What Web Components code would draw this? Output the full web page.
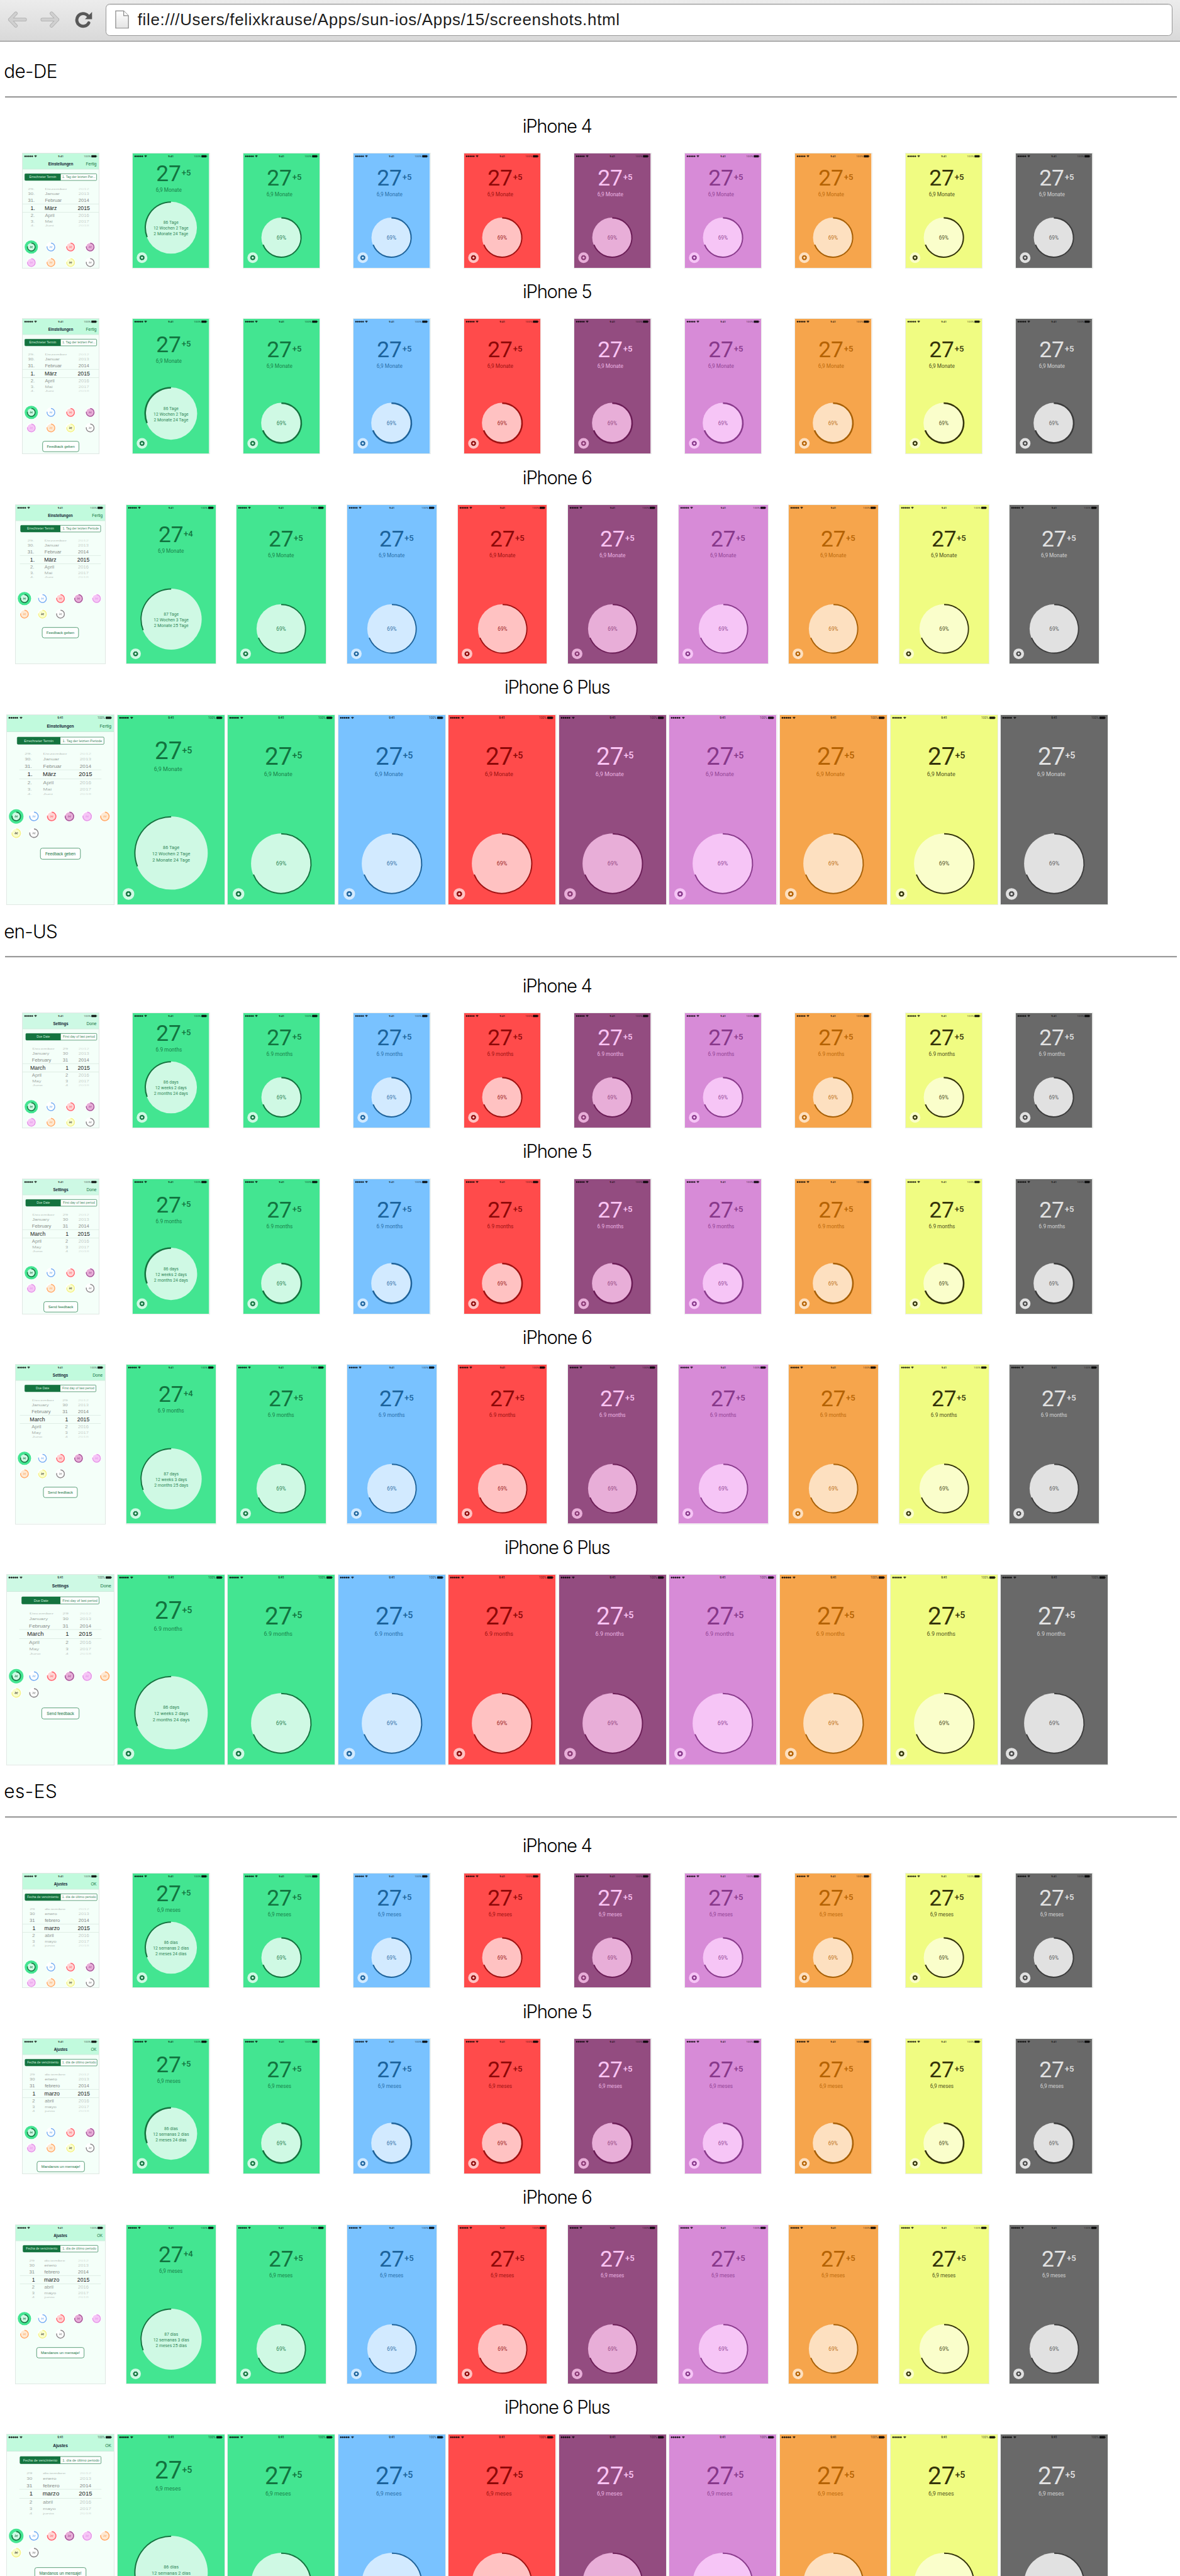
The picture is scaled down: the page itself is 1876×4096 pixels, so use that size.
<!DOCTYPE html>
<html lang="en">
<head>
<meta charset="utf-8">
<title>screenshots.html</title>
<style>
html,body{margin:0;padding:0;background:#fff;overflow:hidden}
body{font-family:Inter,"Liberation Sans",sans-serif}
</style>
</head>
<body>
<overview-page></overview-page>
<script>
// Colour themes of the app: background, digits, disc, progress arc
const THEMES = {
  green:  {bg:'#43e591', ink:'#12733f', disc:'#cff9e4', arc:'#14733f', ring:'#14733f'},
  blue:   {bg:'#79c2ff', ink:'#1b629b', disc:'#d2eaff', arc:'#1f639a', ring:'#7ab2f2'},
  red:    {bg:'#ff4b4b', ink:'#8d0808', disc:'#ffc2c2', arc:'#a01212', ring:'#ff6b74'},
  purple: {bg:'#934c80', ink:'#fbc4f4', disc:'#e8aed8', arc:'#6b1d56', ring:'#a7589a'},
  pink:   {bg:'#d78bd7', ink:'#87388a', disc:'#f6c5f6', arc:'#8a3b8c', ring:'#e49be8'},
  orange: {bg:'#f6a54c', ink:'#b46203', disc:'#fde0c0', arc:'#a86007', ring:'#ffad6b'},
  yellow: {bg:'#f0fc82', ink:'#33330a', disc:'#fafecb', arc:'#33330a', ring:'#f3f38a'},
  gray:   {bg:'#696969', ink:'#e2e2e2', disc:'#e1e1e1', arc:'#3b3b3b', ring:'#8b8b8b'}
};
const ORDER = ['green','blue','red','purple','pink','orange','yellow','gray'];

// Geometry per device; s is the scale of the settings screen
const MODELS = {
  'iPhone 4': {w:128.6,h:193,s:1,cols:4,pitch:33.1,i0:14.6,x27:39.5,y27:46.4,fs:37.7,xp:82.6,mid:60.9,ysub:64.3,drop:7.9,
    big:[64.5,125.2,43.3],small:[64,141.8,33.2],aw:2.2,gx:15.7,gy:175.8,gr:9,tw:1},
  'iPhone 5': {w:128.6,h:227.3,s:1,cols:4,pitch:33.1,i0:14.6,x27:39.5,y27:56.4,fs:37.7,xp:82.6,mid:60.9,ysub:74.3,drop:8,
    big:[64.6,159.8,43.6],small:[64,175.7,33.6],aw:2.7,gx:15.7,gy:210,gr:9,tw:1},
  'iPhone 6': {w:150.6,h:267.6,s:1,cols:5,pitch:30.4,i0:14.7,x27:54,y27:62.6,fs:37.7,xp:96.6,mid:75,ysub:80.3,drop:7.6,
    big:[75.5,192.5,50.9],small:[75.3,208.8,41],aw:2,gx:15.4,gy:251,gr:9,tw:1},
  'iPhone 6 Plus': {w:180.4,h:320,s:1.09,cols:6,pitch:29.9,i0:15.7,x27:62.6,y27:74.6,fs:41.2,xp:108.6,mid:85.2,ysub:94.3,drop:8.7,
    big:[90.3,232.8,61.2],small:[90.2,250.5,50.3],aw:2.1,gx:18.3,gy:301.7,gr:9.8,tw:1.09}
};

const LOCALES = {
  'de-DE': {title:'Einstellungen',tw:42,done:'Fertig',dw:18,left:'Errechneter Termin',lw:45.5,right:'1. Tag der letzten Periode',rshort:'1. Tag der letzten Per...',rw:56,
    feedback:'Feedback geben',fw:47,btn:61.3,sub:'6,9 Monate',sw:43.7,
    days:n=>[n+' Tage',`12 Wochen ${n-84} Tage`,`2 Monate ${n-62} Tage`],dws:[25.5,59,58.3],
    rows:[['29.','Dezember','2012'],['30.','Januar','2013'],['31.','Februar','2014'],['1.','März','2015'],['2.','April','2016'],['3.','Mai','2017'],['4.','Juni','2018']],
    dayX:-43.3,monX:-27.3,segs:[[3.6,124.8],[3.6,124.8],[8.2,143.2],[17.3,163.7]],pale:[0,0,0,0]},
  'en-US': {title:'Settings',tw:25.7,done:'Done',dw:17,left:'Due Date',lw:22.5,right:'First day of last period',rw:54,
    feedback:'Send feedback',fw:42.3,btn:57.2,sub:'6.9 months',sw:44.2,
    days:n=>[n+' days',`12 weeks ${n-84} days`,`2 months ${n-62} days`],dws:[25.3,53.2,57.3],
    rows:[['29','December','2012'],['30','January','2013'],['31','February','2014'],['1','March','2015'],['2','April','2016'],['3','May','2017'],['4','June','2018']],
    dayX:13.2,monX:-51.6,segs:[[5.3,125],[5.3,125],[15.3,135.3],[25,155.4]],pale:[1,1,0,1]},
  'es-ES': {title:'Ajustes',tw:23,done:'OK',dw:9.5,left:'Fecha de vencimiento',lw:53,right:'1. día de último periodo',rw:57,
    feedback:'Mandanos un mensaje!',fw:65.5,btn:80,sub:'6,9 meses',sw:39.5,
    days:n=>[n+' días',`12 semanas ${n-84} días`,`2 meses ${n-62} días`],dws:[23.3,60.5,52.5],
    rows:[['29','diciembre','2012'],['30','enero','2013'],['31','febrero','2014'],['1','marzo','2015'],['2','abril','2016'],['3','mayo','2017'],['4','junio','2018']],
    dayX:-42.7,monX:-27.6,segs:[[4,125.5],[4,125.5],[12.3,138.7],[22,158.7]],pale:[0,0,0,0]}
};

const txt = (x,y,size,fill,str,o={}) =>
  `<text x="${x}" y="${y}" font-size="${size}" fill="${fill}" text-anchor="${o.anchor||'start'}"`+
  (o.w?` textLength="${o.w}" lengthAdjust="spacingAndGlyphs"`:'')+(o.weight?` font-weight="${o.weight}"`:'')+
  (o.op?` opacity="${o.op}"`:'')+`>${str}</text>`;

// Arc starting at 12 o'clock; a positive fraction runs clockwise
function arc(cx,cy,r,f,colour,w){
  const a=f*2*Math.PI, x=cx+r*Math.sin(a), y=cy-r*Math.cos(a);
  return `<path d="M${cx} ${cy-r}A${r} ${r} 0 ${Math.abs(f)>.5?1:0} ${f>0?1:0} ${x.toFixed(2)} ${y.toFixed(2)}" fill="none" stroke="${colour}" stroke-width="${w}"/>`;
}

function statusBar(w,s){
  let o='';
  for(let i=0;i<5;i++) o+=`<circle cx="${4.2+i*3*s}" cy="4.7" r="${1.3*s}"/>`;
  const wx=21.8*s;
  o+=`<path d="M${wx-2.4*s} 3.9Q${wx} 2 ${wx+2.4*s} 3.9L${wx} ${4.7+1.8*s}Z" opacity=".8"/>`;
  o+=txt(w/2,4.7+1.7*s,4.6*s,'#000','9:41',{anchor:'middle',weight:700,op:.85});
  o+=txt(w-13.8*s,4.7+1.6*s,4.5*s,'#000','100%',{anchor:'end',w:11.5*s,op:.7});
  o+=`<rect x="${w-12.7*s}" y="${4.7-1.8*s}" width="${8.6*s}" height="${3.6*s}" rx=".7"/><rect x="${w-3.8*s}" y="4.1" width=".8" height="1.2"/>`;
  return `<g fill="#000" opacity=".88">${o}</g>`;
}

class PhoneShot extends HTMLElement {
  connectedCallback(){
    const model=this.getAttribute('model'), m=MODELS[model], l=LOCALES[this.getAttribute('locale')];
    const screen=this.getAttribute('screen');
    const body = screen==='settings' ? this.settings(m,l,Object.keys(MODELS).indexOf(model))
      : this.home(m,l,THEMES[this.getAttribute('theme')],screen==='days',model);
    this.attachShadow({mode:'open'}).innerHTML=`<style>
      :host{display:block;width:${m.w}px;height:${m.h}px;outline:1.2px solid ${screen==='settings'?'#e0e8e4':'#e9ece9'}}
      svg{display:block;width:100%;height:100%}
      text{font-family:Roboto,"Liberation Sans",sans-serif}
      .h text{font-family:"Liberation Sans",sans-serif}
    </style><svg viewBox="0 0 ${m.w} ${m.h}" preserveAspectRatio="none">${body}${statusBar(m.w,m.s)}</svg>`;
  }
  home(m,l,t,days,model){
    const d=days?0:m.drop, c=days?m.big:m.small, [cx,cy,r]=c, n=model==='iPhone 6'&&days?87:86, k=m.tw;
    const inner = t===THEMES.purple?'#8a3a75':t===THEMES.gray?'#4a4a4a':t.ink;
    let o=`<rect width="100%" height="100%" fill="${t.bg}"/>`;
    o+=txt(m.x27,m.y27+d,m.fs,t.ink,'27',{weight:400,w:m.fs*1.12});
    o+=txt(m.xp,m.y27+d-9.3*k,14*k,t.ink,n===87?'+4':'+5',{w:15.6*k,weight:500});
    o+=txt(m.mid,m.ysub+d,9*k,t.ink,l.sub,{anchor:'middle',w:l.sw*k,op:.85});
    o+=`<circle cx="${cx}" cy="${cy}" r="${r+.5}" fill="${t.disc}"/>`+arc(cx,cy,r,days?-.31:.69,t.arc,m.aw);
    if(days) l.days(n).forEach((s,i)=>o+=txt(cx,cy-6*k+i*9.4*k,7.3*k,inner,s,{anchor:'middle',w:l.dws[i]*k,op:.85}));
    else o+=txt(cx,cy+3.3,8.8*k,inner,'69%',{anchor:'middle',w:16.3*k,op:.85});
    o+=`<circle cx="${m.gx}" cy="${m.gy}" r="${m.gr}" fill="${t.disc}"/>`+
       `<circle cx="${m.gx}" cy="${m.gy}" r="${2.9*k}" fill="none" stroke="${inner}" stroke-width="${2.1*k}"/>`+
       `<circle cx="${m.gx}" cy="${m.gy}" r="${4*k}" fill="none" stroke="${inner}" stroke-width="${.8*k}" stroke-dasharray="${1.57*k} ${1.57*k}"/>`;
    return o;
  }
  settings(m,l,idx){
    const s=m.s, c=m.w/2, green='#14733f', plus=s>1;
    let o='<g class="h">';
    o+=`<rect width="100%" height="100%" fill="#f4fff9"/>`;
    o+=`<rect width="100%" height="${plus?28:26.2}" fill="${l.pale[idx]?'#cdf9e4':'#c1fadd'}"/><rect y="${plus?28:26.2}" width="100%" height=".6" fill="#b9dccb"/>`;
    o+=txt(c,plus?21:19.8,7.4*s,'#123',l.title,{anchor:'middle',weight:700,w:l.tw*s});
    o+=txt(m.w-4*s,plus?21:19.8,7.6*s,green,l.done,{anchor:'end',w:l.dw*s});
    const [x0,x1]=l.segs[idx], sy=plus?37.2:34.3, sh=plus?12:11.2, by=sy+sh/2+1.9*s;
    o+=`<rect x="${x0}" y="${sy}" width="${x1-x0}" height="${sh}" rx="1.4" fill="#fff" stroke="${green}" stroke-width=".7"/>`;
    o+=`<path d="M${c} ${sy}H${x0+1.4}a1.4 1.4 0 0 0-1.4 1.4v${sh-2.8}a1.4 1.4 0 0 0 1.4 1.4H${c}Z" fill="${green}"/>`;
    o+=txt((x0+c)/2,by,5.4*s,'#cdeedb',l.left,{anchor:'middle',w:l.lw*s});
    o+=txt((x1+c)/2+.3,by,5.4*s,green,idx<2&&l.rshort||l.right,{anchor:'middle',w:(l.rw+(l.rshort&&idx>1?5:0))*s,op:.85});
    const py=plus?99.7:91.8, off=[-31.6,-23.6,-12.6,0,12.4,23,30.7], sq=[.35,.75,.95,1,.95,.75,.35], op=[.3,.42,.55,1,.48,.38,.28];
    const lx=idx<2?0:plus?21:7;
    for(const y of [-7,7]) o+=`<rect x="${lx}" y="${py+y*s}" width="${m.w-2*lx}" height=".6" fill="#cfe0d7"/>`;
    l.rows.forEach((row,i)=>{
      const f=(i===3?9.3:8.1)*s, far=Math.abs(i-3), b=f*.36;
      const place=(x,str,a,k)=>`<g transform="translate(${x} ${py+off[i]*s}) scale(1 ${sq[i]})">${txt(0,b,f,'#1a1a1a',str,{anchor:a,op:(op[i]*k).toFixed(2)})}</g>`;
      const enShift=l.title==='Settings'?(i===3?0:2.6+far*.4):(i===3?0:.6);
      o+=place(c+l.dayX*s-(i===3?0:.8),row[0],'end',1);
      o+=place(c+(l.monX+enShift)*s,row[1],'start',1);
      o+=place(c+38.8*s,row[2],'middle',i===3||i===2?1:.55);
    });
    ORDER.forEach((name,i)=>{
      const x=m.i0+(i%m.cols)*m.pitch, y=(plus?171:157.8)+Math.floor(i/m.cols)*(plus?28.3:26.2), t=THEMES[name], sel=i===0;
      o+=`<circle cx="${x}" cy="${y}" r="${(sel?11.2:8.4)*s}" fill="${sel?t.bg:'#fff'}"/>`;
      o+=`<circle cx="${x}" cy="${y}" r="${6.6*s}" fill="${name==='gray'||name==='blue'?'#fff':t.disc}" opacity="${['red','orange'].includes(name)?.7:1}"/>`;
      o+=arc(x,y,6.6*s,.78,t.ring,1.6*s);
      o+=`<g stroke="${name==='yellow'?'#333':t.ring}" stroke-width="${.8*s}" fill="none" opacity=".85"><path d="M${x-1.6*s} ${y-2*s}L${x+1.6*s} ${y+2*s}"/><circle cx="${x-1.4*s}" cy="${y+.5*s}" r="${.7*s}"/><circle cx="${x+1.5*s}" cy="${y-.4*s}" r="${.7*s}"/></g>`;
    });
    if(idx){
      const bw=l.btn*(plus?(l.btn>70?1.08:1.1):1), y=plus?224.5:206.5, h=plus?18.7:17.6;
      o+=`<rect x="${c-bw/2}" y="${y}" width="${bw}" height="${h}" rx="3.4" fill="#fdfffe" stroke="${green}" stroke-width=".9" stroke-opacity=".8"/>`;
      o+=txt(c,y+h/2+2.2*s,6.4*s,green,l.feedback,{anchor:'middle',w:l.fw*s});
    }
    return o+'</g>';
  }
}
customElements.define('phone-shot',PhoneShot);

// Single line of text whose tracking is adjusted to a set width
class FitText extends HTMLElement {
  connectedCallback(){
    this.attachShadow({mode:'open'}).innerHTML='<style>:host{display:inline-block;white-space:nowrap}span{display:inline-block}</style><span><slot></slot></span>';
    this.fit(this.textContent.length);
  }
  fit(count){
    const s=this.shadowRoot.querySelector('span');
    s.style.letterSpacing='0px';
    if(s.offsetWidth&&count){
      const gap=(+this.getAttribute('width')-s.offsetWidth)/count;
      s.style.letterSpacing=gap.toFixed(3)+'px';
      s.style.marginRight=(-gap).toFixed(3)+'px';
    }
  }
}
customElements.define('fit-text',FitText);

class DeviceRow extends HTMLElement {
  connectedCallback(){
    const model=this.getAttribute('model'), locale=this.getAttribute('locale');
    const shot=(screen,theme)=>`<div><phone-shot model="${model}" locale="${locale}" screen="${screen}" theme="${theme}"></phone-shot></div>`;
    this.attachShadow({mode:'open'}).innerHTML=`<style>
      :host{display:block;width:1862px;margin-left:9.2px}
      h3{margin:0;height:86.4px;box-sizing:border-box;display:flex;justify-content:center;align-items:flex-end;padding-bottom:26px;font-weight:350;font-size:31px;line-height:40px;color:#000}
      .grid{display:grid;grid-template-columns:repeat(10,186.2px);justify-items:center}
    </style><h3><fit-text width="${model.length>8?178:116.5}">${model}</fit-text></h3>
    <div class="grid">${shot('settings','green')}${shot('days','green')}${ORDER.map(t=>shot('percent',t)).join('')}</div>`;
  }
}
customElements.define('device-row',DeviceRow);

class LocaleSection extends HTMLElement {
  connectedCallback(){
    const locale=this.getAttribute('locale');
    this.attachShadow({mode:'open'}).innerHTML=`<style>
      :host{display:block;height:1450.5px}
      h2{margin:0;height:92.4px;box-sizing:border-box;padding:31px 0 0 6.5px;font-weight:350;font-size:31.5px;line-height:40px;color:#000}
      hr{margin:0 5px 6.8px 8px;border:0;height:2px;background:#9b9b9b;border-bottom:1px solid #e6e6e6}
    </style><h2><fit-text width="90">${locale}</fit-text></h2><hr>
    ${Object.keys(MODELS).map(m=>`<device-row model="${m}" locale="${locale}"></device-row>`).join('')}`;
  }
}
customElements.define('locale-section',LocaleSection);

class BrowserBar extends HTMLElement {
  connectedCallback(){
    this.attachShadow({mode:'open'}).innerHTML=`<style>
      :host{display:flex;align-items:flex-start;box-sizing:border-box;height:70px;padding:6px 13px 0 13px;background:linear-gradient(#ececec,#d9d9d9);border-bottom:1.2px solid #777}
      svg{display:block;flex:none}
      .nav{margin-top:12px}.fwd{margin-left:22px}.re{margin:12px 0 0 25px}
      .field{display:flex;align-items:center;flex:1;margin-left:22px;height:54px;box-sizing:border-box;background:#fff;border:1.3px solid #979797;border-radius:7px;padding-left:15px;box-shadow:inset 0 1px 1px #ddd}
      .url{margin:2px 0 0 14px;font:27.5px/40px "Liberation Sans",sans-serif;color:#1c1c1c}
    </style>
    <svg class="nav" width="33" height="30" viewBox="0 0 33 30"><g fill="none" stroke-linecap="round" stroke-linejoin="round"><path d="M14 4.500 4 15l10 10.500M4 15h25.500" stroke="#b4b4b4" stroke-width="6"/><path d="M14 4.500 4 15l10 10.500M4 15h25.500" stroke="#d0d0d0" stroke-width="4"/></g></svg>
    <svg class="nav fwd" width="33" height="30" viewBox="0 0 33 30"><g fill="none" stroke-linecap="round" stroke-linejoin="round"><path d="M19 4.500 29 15 19 25.500M29 15H3.500" stroke="#b4b4b4" stroke-width="6"/><path d="M19 4.500 29 15 19 25.500M29 15H3.500" stroke="#d0d0d0" stroke-width="4"/></g></svg>
    <svg class="re" width="30" height="30" viewBox="0 0 30 30"><path d="M23.500 20.500A10.700 10.700 0 1 1 21.500 8" fill="none" stroke="#585858" stroke-width="5.200" stroke-linecap="round"/><path d="M29 2V14.300H17Z" fill="#585858"/></svg>
    <div class="field">
      <svg width="24" height="32" viewBox="0 0 24 32"><defs><linearGradient id="p" x2="0" y2="1"><stop stop-color="#fff"/><stop offset="1" stop-color="#e4e4e4"/></linearGradient></defs><path d="M1 1.500H14.500L22.500 9.500V30.500H1Z" fill="url(#p)" stroke="#888" stroke-width="1.300"/><path d="M14.500 1.500V9.500H22.500" fill="#fff" stroke="#888" stroke-width="1.300"/></svg>
      <fit-text class="url" width="814"><slot></slot></fit-text>
    </div>`;
    this.shadowRoot.querySelector('fit-text').fit(this.textContent.length);
  }
}
customElements.define('browser-bar',BrowserBar);

class OverviewPage extends HTMLElement {
  connectedCallback(){
    this.attachShadow({mode:'open'}).innerHTML=`<style>
      :host{display:block;width:1990px;height:4345px;overflow:hidden;background:#fff;zoom:.9427}
    </style>
    <browser-bar>file:///Users/felixkrause/Apps/sun-ios/Apps/15/screenshots.html</browser-bar>
    <locale-section locale="de-DE"></locale-section>
    <locale-section locale="en-US"></locale-section>
    <locale-section locale="es-ES"></locale-section>`;
  }
}
customElements.define('overview-page',OverviewPage);
</script>
</body>
</html>
